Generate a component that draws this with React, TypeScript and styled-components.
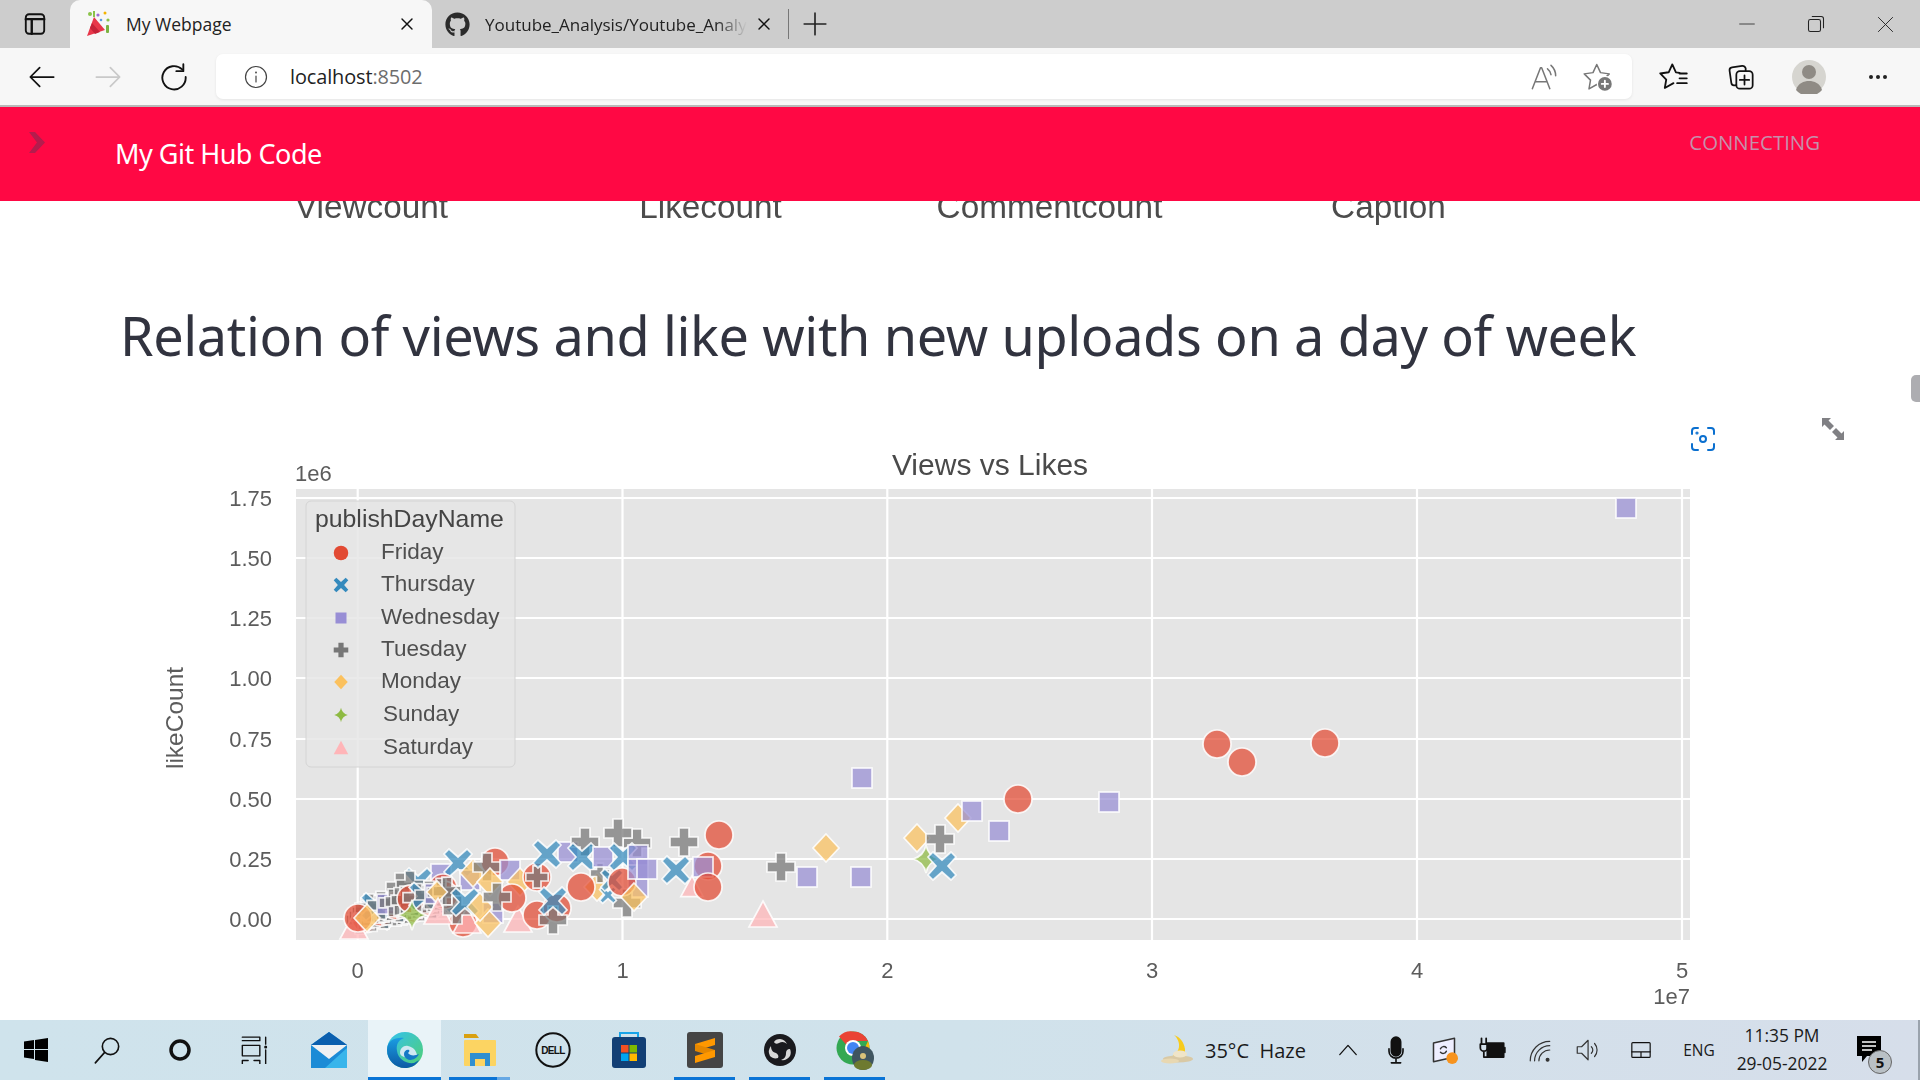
import React from 'react';
import styled, { createGlobalStyle } from 'styled-components';
import { FaGithub } from 'react-icons/fa';

const Global = createGlobalStyle`
  html, body { margin: 0; padding: 0; background: #fff; overflow: hidden; }
  * { box-sizing: border-box; }
`;

const UI = `"Open Sans", "Noto Sans", "Liberation Sans", sans-serif`;

const Screen = styled.div`
  width: 1920px; height: 1080px; display: flex; flex-direction: column; overflow: hidden;
  font-family: ${UI}; background: #fff;
`;

/* ---------- browser chrome ---------- */
const TabStrip = styled.div`
  height: 48px; flex: none; background: #cdcdcd; display: flex; align-items: stretch;
`;
const Slot = styled.div<{ $w: number }>`
  width: ${p => p.$w}px; flex: none;
  display: flex; align-items: center; justify-content: center;
`;
const Tab = styled.div<{ $active?: boolean; $w: number }>`
  width: ${p => p.$w}px; flex: none; display: flex; align-items: center; position: relative;
  padding-left: ${p => (p.$active ? 16 : 13)}px;
  background: ${p => (p.$active ? '#f7f7f7' : 'transparent')};
  border-radius: ${p => (p.$active ? '10px 10px 0 0' : '0')};
`;
const TabTitle = styled.span<{ $w: number; $active?: boolean }>`
  width: ${p => p.$w}px; margin-left: ${p => (p.$active ? 14 : 15)}px; font-size: ${p => (p.$active ? 17.5 : 17)}px; color: #222;
  white-space: nowrap; overflow: hidden; flex: none;
  ${p => (p.$active ? '' : '-webkit-mask-image: linear-gradient(90deg,#000 88%,transparent);')}
`;
const TabClose = styled.div<{ $ml: number }>`
  margin-left: ${p => p.$ml}px; display: flex; flex: none;
`;
const TabDivider = styled.div`
  width: 1px; height: 30px; background: #777; align-self: center; margin-left: 14px; flex: none;
`;
const WindowControls = styled.div`
  margin-left: auto; display: flex; align-items: center; height: 100%;
`;
const Toolbar = styled.div`
  height: 59px; flex: none; background: #f7f7f7; border-bottom: 2px solid #b9b9b9;
  display: flex; align-items: flex-start; padding-left: 9px; padding-top: 6px;
`;
const ToolSlot = styled.div<{ $w: number }>`
  width: ${p => p.$w}px; height: 45px; flex: none; display: flex; align-items: center; justify-content: center;
`;
const AddressBar = styled.div`
  width: 1416px; height: 45px; margin-left: 9px; margin-right: 8px; flex: none; background: #fff; border-radius: 7px;
  box-shadow: 0 1px 3px rgba(0,0,0,.08); display: flex; align-items: center; padding-left: 28px; padding-right: 7px;
`;
const Host = styled.span`
  margin-left: 22px; font-size: 19.9px; color: #222; flex: 1; letter-spacing: -.1px;
`;
const Port = styled.span`color: #6d6d6d;`;

/* ---------- streamlit page ---------- */
const RedHeader = styled.header`
  height: 94px; flex: none; background: #ff0844; position: relative; z-index: 2;
  display: flex; align-items: flex-start; padding-left: 29px;
`;
const Collapse = styled.div`margin-top: 25px; width: 16px; height: 21px; display: flex;`;
const HeaderLink = styled.span`
  margin-left: 70px; margin-top: 26px; color: #fff; font-size: 27px; line-height: 42px;
  font-family: "Noto Sans", sans-serif; letter-spacing: -.5px;
`;
const Status = styled.span`
  margin-left: auto; margin-right: 100px; margin-top: 20px; font-size: 20.4px; line-height: 31px; color: #c690ab;
`;
const Content = styled.main`
  flex: 1; position: relative; overflow: hidden; background: #fff;
`;
const ClippedHeads = styled.div`
  margin-top: -13px; padding-left: 202px; display: grid; grid-template-columns: repeat(4, 339px);
  font-family: "Liberation Sans", Arial, sans-serif; font-size: 33.3px; line-height: 38px; color: #4c4c4c;
  text-align: center; filter: blur(.5px);
`;
const Heading = styled.h2`
  margin: 73px 0 0 120px; font-weight: 400; font-family: "Noto Sans", sans-serif; font-size: 54px; line-height: 72px;
  color: #31333f; white-space: nowrap; letter-spacing: -.37px;
`;
const Figure = styled.div`
  position: relative; margin: 59px 0 0 150px; width: 1550px; height: 580px;
`;
const ChartSvg = styled.svg`
  display: block; width: 1550px; height: 580px; filter: blur(.6px);
`;
const ChartText = styled.text<{ $s: number; $c?: string }>`
  font-family: "Liberation Sans", Arial, sans-serif; font-size: ${p => p.$s}px; fill: ${p => p.$c ?? '#5c5c5c'};
`;
const CameraBtn = styled.div`
  position: absolute; left: 1541px; top: -3px; width: 24px; height: 24px; display: flex;
`;
const ExpandBtn = styled.div`
  position: absolute; left: 1672px; top: -12px; width: 22px; height: 22px; display: flex;
`;
const ScrollThumb = styled.div`
  position: absolute; right: 0; top: 174px; width: 9px; height: 27px; border-radius: 5px 0 0 5px; background: #adadb1;
`;

/* ---------- taskbar ---------- */
const Taskbar = styled.footer`
  height: 60px; flex: none; display: flex; align-items: stretch; position: relative;
  background: linear-gradient(90deg, #cfe3ec 0%, #d0e2eb 50%, #d6deea 100%);
  border-right: 2px solid #9aa3ad;
`;
const TaskSlot = styled.div<{ $w: number; $ml?: number; $on?: boolean; $active?: boolean }>`
  width: ${p => p.$w}px; margin-left: ${p => p.$ml ?? 0}px; flex: none; position: relative;
  display: flex; align-items: center; justify-content: center; padding-bottom: 1px;
  background: ${p => (p.$active ? '#e9f3f8' : 'transparent')};
  ${p => (p.$on ? 'border-bottom: 3px solid #0a74d6; padding-top: 3px;' : '')}
`;
const SplitUnderline = styled.div`
  position: absolute; left: 48px; right: 0; bottom: -3px; height: 3px; background: #66a8e4;
`;
const Weather = styled.span`
  margin-left: 3px; width: 111px; flex: none; align-self: center; font-size: 20px; color: #1a1a1a; white-space: pre;
`;
const Lang = styled.span`font-size: 15.5px; color: #1a1a1a;`;
const Clock = styled.div`
  display: flex; flex-direction: column; align-items: center; gap: 5px; font-size: 17.4px; line-height: 23px; color: #1a1a1a;
`;
const Tray = styled.div`margin-left: auto; display: flex; align-items: stretch; padding-right: 16px;`;
const NotifWrap = styled.div`position: relative; width: 26px; height: 28px;`;
const NotifBadge = styled.span`
  position: absolute; left: 11px; top: 14px; width: 24px; height: 24px; border-radius: 50%; background: #b9c0c5;
  border: 1px solid #666; font-size: 15px; font-weight: 700; color: #111; display: flex; align-items: center; justify-content: center;
`;
const DellWord = styled.text`
  font-family: "Liberation Sans", sans-serif; font-weight: 700; font-size: 10px; letter-spacing: -.6px; fill: #111;
`;

/* ---------- icons ---------- */
const L = ({ s = 24, children, sw = 1.6, c = '#111' }: { s?: number; children: React.ReactNode; sw?: number; c?: string }) => (
  <svg width={s} height={s} viewBox="0 0 24 24" fill="none" stroke={c} strokeWidth={sw} strokeLinecap="round" strokeLinejoin="round">{children}</svg>
);

const Party = () => (
  <svg width="26" height="28" viewBox="0 0 26 28">
    <path d="M1 26 L8 7 L19 20 Z" fill="#e8374a" />
    <path d="M6 13 L14 22 L9 24 L4 18Z" fill="#c62238" />
    <circle cx="4" cy="4" r="2" fill="#8bc34a" /><circle cx="12" cy="5" r="1.6" fill="#9c6bd6" />
    <circle cx="19" cy="3" r="1.5" fill="#f4b400" /><circle cx="22" cy="10" r="1.6" fill="#8bc34a" />
    <rect x="20" y="15" width="3" height="8" rx="1" fill="#7cb342" /><circle cx="15" cy="10" r="1.3" fill="#5c9be0" />
    <rect x="7" y="1" width="2" height="6" fill="#8bc34a" />
  </svg>
);

const C: Record<string, string> = {
  o: '#E24A33', x: '#348ABD', s: '#988ED5', p: '#777777', d: '#FBC15E', e: '#8EBA42', t: '#FFB5B8',
};
type Kind = 'o' | 'x' | 's' | 'p' | 'd' | 'e' | 't';

const Marker = ({ k, x, y, r = 1, a = 0.73, edge = true }: { k: Kind; x: number; y: number; r?: number; a?: number; edge?: boolean }) => {
  const common = {
    fill: C[k], fillOpacity: a, stroke: '#fff', strokeOpacity: edge ? 0.85 : 0, strokeWidth: edge ? 1.7 : 0,
  };
  const t = `translate(${x} ${y}) scale(${r})`;
  switch (k) {
    case 'o': return <circle cx={x} cy={y} r={14 * r} {...common} />;
    case 's': return <rect x={x - 10 * r} y={y - 10 * r} width={20 * r} height={20 * r} {...common} />;
    case 'p': return <path transform={t} d="M-5-14H5V-5H14V5H5V14H-5V5H-14V-5H-5Z" {...common} vectorEffect="non-scaling-stroke" />;
    case 'x': return <path transform={t} d="M-9-14L0-6 9-14 14-9 6 0 14 9 9 14 0 6-9 14-14 9-6 0-14-9Z" {...common} vectorEffect="non-scaling-stroke" />;
    case 'd': return <path transform={t} d="M0-14L13 0 0 14-13 0Z" {...common} vectorEffect="non-scaling-stroke" />;
    case 'e': return <path transform={t} d="M0-14Q2-3 13 0Q2 3 0 14Q-2 3-13 0Q-2-3 0-14Z" {...common} vectorEffect="non-scaling-stroke" />;
    default: return <path transform={t} d="M0-14L14 12H-14Z" {...common} vectorEffect="non-scaling-stroke" />;
  }
};

/* dense run of small uploads near the origin */
const originRun: [Kind, number, number, number?][] = [];
const cycle: Kind[] = ['p', 'o', 'p', 'x', 'p', 's', 'p', 'p'];
for (let i = 0; i < 56; i++) {
  const x = 360 + (i % 14) * 6 + Math.floor(i / 14) * 3;
  const y = 920 - (i % 14) * 1.3 - Math.floor(i / 14) * 4;
  originRun.push([cycle[i % cycle.length], x, y, 1]);
}

const pts: [Kind, number, number, number?][] = [
  ['o', 495, 862], ['s', 441, 874], ['x', 458, 863], ['x', 418, 882], ['p', 400, 887], ['p', 410, 885],
  ['o', 443, 888], ['s', 470, 880], ['d', 473, 873], ['p', 487, 867], ['s', 510, 870], ['d', 520, 882],
  ...originRun,
  ['o', 463, 923], ['t', 467, 921], ['d', 437, 892, .8], ['s', 493, 913], ['d', 488, 923], ['d', 490, 882],
  ['t', 354, 927], ['o', 358, 918], ['d', 367, 918], ['e', 412, 915, 1.1],
  ['t', 438, 912], ['p', 457, 910], ['x', 465, 902], ['d', 480, 907], ['t', 518, 920], ['o', 512, 898], ['p', 497, 897],
  ['o', 537, 915], ['o', 537, 877], ['p', 537, 877, .8], ['o', 557, 908], ['p', 553, 920], ['x', 553, 901],
  ['s', 568, 852], ['p', 585, 842], ['x', 547, 854], ['x', 582, 857], ['d', 597, 887], ['o', 581, 887], ['p', 600, 873, .7], ['s', 603, 857],
  ['p', 637, 843], ['p', 618, 833], ['x', 623, 857], ['s', 638, 855], ['s', 638, 887], ['p', 627, 903], ['x', 608, 895, .6], ['x', 612, 880, .8], ['o', 622, 882],
  ['s', 638, 869], ['s', 647, 869], ['d', 634, 897],
  ['t', 692, 887, .8], ['o', 708, 866], ['x', 676, 870], ['s', 703, 867], ['o', 708, 887], ['p', 684, 842], ['o', 719, 835],
  ['t', 763, 915], ['p', 781, 867], ['s', 807, 877], ['d', 826, 848], ['s', 862, 778], ['s', 861, 877], ['d', 917, 838], ['p', 940, 839],
  ['e', 926, 859], ['x', 942, 866], ['d', 958, 818], ['s', 972, 811], ['s', 999, 831], ['o', 1018, 799], ['s', 1109, 802],
  ['o', 1217, 744], ['o', 1242, 762], ['o', 1325, 743], ['s', 1626, 508],
];

const ys = [
  ['1.75', 498], ['1.50', 558], ['1.25', 618], ['1.00', 678], ['0.75', 739], ['0.50', 799], ['0.25', 859], ['0.00', 919],
] as [string, number][];
const xs = [357.7, 622.5, 887.3, 1152, 1417, 1682];

const legend: [Kind, string, number, number][] = [
  ['o', 'Friday', 552, 381], ['x', 'Thursday', 584, 381], ['s', 'Wednesday', 617, 381], ['p', 'Tuesday', 649, 381],
  ['d', 'Monday', 681, 381], ['e', 'Sunday', 714, 383], ['t', 'Saturday', 747, 383],
];

const Chart = () => (
  <ChartSvg viewBox="150 430 1550 580">
    <rect x="296" y="489" width="1394" height="451" fill="#e5e5e5" />
    {ys.map(([, y]) => <line key={y} x1="296" x2="1690" y1={y} y2={y} stroke="#fff" strokeWidth="2.2" />)}
    {xs.map(x => <line key={x} x1={x} x2={x} y1="489" y2="940" stroke="#fff" strokeWidth="2.2" />)}
    <ChartText $s={30} $c="#4a4a4a" x="990" y="475" textAnchor="middle">Views vs Likes</ChartText>
    <ChartText $s={22} x="295" y="481">1e6</ChartText>
    {ys.map(([t, y]) => <ChartText key={t} $s={22} x="272" y={y + 8} textAnchor="end">{t}</ChartText>)}
    {xs.map((x, i) => <ChartText key={x} $s={22} x={x} y="978" textAnchor="middle">{i}</ChartText>)}
    <ChartText $s={22} x="1690" y="1004" textAnchor="end">1e7</ChartText>
    <ChartText $s={24.5} x="0" y="0" textAnchor="middle" transform="translate(183 718) rotate(-90)">likeCount</ChartText>
    {pts.map(([k, x, y, r], i) => <Marker key={i} k={k} x={x} y={y} r={r ?? 1} />)}
    <rect x="306" y="501" width="209" height="266" rx="5" fill="#e5e5e5" fillOpacity=".82" stroke="#d4d4d4" />
    <ChartText $s={24.8} $c="#444" x="315" y="527">publishDayName</ChartText>
    {legend.map(([k, label, y, x]) => (
      <g key={label}>
        <Marker k={k} x={341} y={y + 1} r={k === 's' ? .55 : .52} a={1} edge={false} />
        <ChartText $s={22.5} $c="#4f4f4f" x={x} y={y + 7}>{label}</ChartText>
      </g>
    ))}
  </ChartSvg>
);

const EdgeLogo = () => (
  <svg width="38" height="38" viewBox="0 0 38 38">
    <defs>
      <linearGradient id="eg1" x1="0" y1="0" x2="1" y2="1"><stop offset="0" stopColor="#35c1f1" /><stop offset="1" stopColor="#50d070" /></linearGradient>
      <linearGradient id="eg2" x1="0" y1="0" x2="0" y2="1"><stop offset="0" stopColor="#1b9de2" /><stop offset="1" stopColor="#0c59a4" /></linearGradient>
    </defs>
    <circle cx="19" cy="19" r="18" fill="url(#eg1)" />
    <path d="M1 19C1 9 10 6 18 7 12 9 10 14 11 20c1 8 9 13 17 12l5-3c-3 6-9 8-14 8C9 37 1 29 1 19Z" fill="url(#eg2)" />
    <path d="M14 22c0-5 4-8 8-7 5 1 8 4 9 9-5 3-10 3-13 2-2-1-4-2-4-4Z" fill="#cfe8f2" />
    <path d="M18 23c0-3 3-5 5-4 1 1 0 2-1 3 2 3 7 3 11 1-3 6-9 7-12 5-2-1-3-3-3-5Z" fill="#1479c6" />
  </svg>
);
const MailIcon = () => (
  <svg width="36" height="36" viewBox="0 0 36 36">
    <path d="M0 13L18 0 36 13V36H0Z" fill="#1b8bd6" />
    <path d="M0 13L18 0 36 13 18 13Z" fill="#0b5fae" />
    <path d="M0 13H36L18 27Z" fill="#eef1f3" />
    <path d="M36 16V36H14Z" fill="#40bff0" opacity=".8" />
  </svg>
);
const FolderIcon = () => (
  <svg width="34" height="36" viewBox="0 0 34 36">
    <path d="M1 2h12l3 4H1Z" fill="#d9a010" />
    <rect x="1" y="8" width="32" height="26" rx="1" fill="#fcd462" />
    <path d="M7 34V21h20v13h-5v-7h-10v7Z" fill="#2f8fd0" />
  </svg>
);
const DellIcon = () => (
  <svg width="36" height="38" viewBox="0 0 36 36">
    <circle cx="18" cy="18" r="16.7" fill="none" stroke="#111" strokeWidth="2" />
    <DellWord x="18" y="22" textAnchor="middle">DELL</DellWord>
  </svg>
);
const StoreIcon = () => (
  <svg width="36" height="38" viewBox="0 0 36 38">
    <path d="M9 6V2h18v4" fill="none" stroke="#18a4e8" strokeWidth="2" />
    <rect x="1" y="6" width="34" height="31" rx="3" fill="#123f75" />
    <rect x="10" y="14" width="7.5" height="7.5" fill="#f25022" /><rect x="18.5" y="14" width="7.5" height="7.5" fill="#7fba00" />
    <rect x="10" y="22.5" width="7.5" height="7.5" fill="#00a4ef" /><rect x="18.5" y="22.5" width="7.5" height="7.5" fill="#ffb900" />
  </svg>
);
const SublimeIcon = () => (
  <svg width="36" height="36" viewBox="0 0 36 36">
    <rect width="36" height="36" rx="3" fill="#454545" />
    <path d="M8 12L28 6V13L8 19Z" fill="#ff9800" />
    <path d="M8 12L28 18V25L8 19Z" fill="#e58700" />
    <path d="M8 24L28 18V25L8 31Z" fill="#ff9800" />
  </svg>
);
const ObsIcon = () => (
  <svg width="32" height="36" viewBox="0 0 32 32">
    <circle cx="16" cy="16" r="16" fill="#1a1a1e" />
    <path d="M16 5a9 9 0 0 1 7 5c-2-2-5-3-8-1-2 1-4 1-5-1 1-2 3-3 6-3Z" fill="#d8d8d8" />
    <path d="M6 22a9 9 0 0 1 1-10c0 3 1 6 5 7 2 1 3 3 2 5-3 1-6 0-8-2Z" fill="#d8d8d8" />
    <path d="M26 22a9 9 0 0 1-9 4c3-1 5-3 5-7 0-2 1-4 4-4 1 2 1 5 0 7Z" fill="#d8d8d8" />
  </svg>
);
const ChromeIcon = () => (
  <svg width="38" height="40" viewBox="0 0 38 40">
    <circle cx="17" cy="18" r="16.5" fill="#34a853" />
    <path d="M17 1.5A16.5 16.5 0 0 1 32 11H17a7 7 0 0 0-6.5 4L3 6.5A16.5 16.5 0 0 1 17 1.5Z" fill="#ea4335" />
    <path d="M32 11a16.5 16.5 0 0 1-12 23l7-12Z" fill="#fbbc05" />
    <circle cx="17" cy="18" r="8" fill="#fff" /><circle cx="17" cy="18" r="6" fill="#4285f4" />
    <ellipse cx="27" cy="28" rx="11" ry="12" fill="#3f5560" />
    <ellipse cx="27" cy="35" rx="9" ry="5" fill="#6e7a30" />
    <ellipse cx="27" cy="26" rx="3" ry="3" fill="#d9c27a" />
  </svg>
);
const MoonIcon = () => (
  <svg width="36" height="36" viewBox="0 0 36 36">
    <path d="M18 3C10 10 11 22 24 26 17 30 6 28 7 17 8 10 12 5 18 3Z" transform="matrix(-1 0 0 1 34 0)" fill="#f7cb1e" />
    <ellipse cx="20" cy="27" rx="15" ry="3.4" fill="#d9c9a5" /><ellipse cx="22" cy="22" rx="7" ry="3.6" fill="#efe4c8" /><ellipse cx="12" cy="29" rx="9" ry="2.5" fill="#e8d8b2" />
  </svg>
);

const STAR = 'M11 2L14 8.500L21 9.500L16 14.500L17.200 21.500L11 18L4.800 21.500L6 14.500L1 9.500L8 8.500Z';

export default function App() {
  return (
    <>
      <Global />
      <Screen>
        <TabStrip>
          <Slot $w={70}>
            <L s={26} sw={1.7}><rect x="3.5" y="3" width="17" height="18" rx="3" /><path d="M3.5 7.5h17M9 7.5V21" strokeWidth="2.2" /></L>
          </Slot>
          <Tab $active $w={362}>
            <Party />
            <TabTitle $active $w={264}>My Webpage</TabTitle>
            <TabClose $ml={7}><L s={20} sw={1.7}><path d="M6 6l12 12M18 6L6 18" /></L></TabClose>
          </Tab>
          <Tab $w={342}>
            <FaGithub size={25} color="#2b2b2b" />
            <TabTitle $w={262}>Youtube_Analysis/Youtube_Analysis</TabTitle>
            <TabClose $ml={7}><L s={20} sw={1.7}><path d="M6 6l12 12M18 6L6 18" /></L></TabClose>
          </Tab>
          <TabDivider />
          <Slot $w={52}><L s={26} sw={1.5} c="#222"><path d="M12 2v20M2 12h20" /></L></Slot>
          <WindowControls>
            <Slot $w={70}><L s={16} sw={1.2} c="#222"><path d="M1 12h22" /></L></Slot>
            <Slot $w={68}><L s={18} sw={1.4} c="#222"><rect x="2" y="6" width="16" height="16" rx="2.5" /><path d="M7 2h12a3 3 0 0 1 3 3v12" /></L></Slot>
            <Slot $w={70}><L s={17} sw={1.3} c="#222"><path d="M2 2l20 20M22 2L2 22" /></L></Slot>
          </WindowControls>
        </TabStrip>
        <Toolbar>
          <ToolSlot $w={66}><L s={28} sw={1.5}><path d="M22 12H3M10 4l-8 8 8 8" /></L></ToolSlot>
          <ToolSlot $w={66}><L s={28} sw={1.5} c="#c9c9c9"><path d="M2 12h19M14 4l8 8-8 8" /></L></ToolSlot>
          <ToolSlot $w={66}><L s={28} sw={1.6}><path d="M19 5.5A10 10 0 1 0 22 12" /><path d="M20 1v6h-6" /></L></ToolSlot>
          <AddressBar>
            <L s={24} sw={1.2} c="#444"><circle cx="12" cy="12" r="10.5" /><path d="M12 11v6" /><circle cx="12" cy="7.5" r=".4" /></L>
            <Host>localhost<Port>:8502</Port></Host>
            <ToolSlot $w={54}><L s={28} sw={1.3} c="#777"><path d="M2 22L9 4h1l7 18M4.5 16h10" /><path d="M15 5a8 8 0 0 1 3 5M18 2a12 12 0 0 1 4 9" /></L></ToolSlot>
            <ToolSlot $w={54}>
              <L s={30} sw={1.2} c="#777"><path d={STAR} /><circle cx="17.500" cy="17.500" r="6.500" fill="#fff" stroke="none" /><circle cx="17.500" cy="17.500" r="5.500" fill="#777" stroke="none" /><path d="M17.500 15v5M15 17.500h5" stroke="#fff" strokeWidth="1.500" /></L>
            </ToolSlot>
          </AddressBar>
          <ToolSlot $w={67}><L s={29} sw={1.5}><path d="M17 9L14 8.500L11 2L8 8.500L1 9.500L6 14.500L4.800 21.500L12 17.500" /><path d="M17 9.500h6M17 13.500h6M15 17.500h8" /></L></ToolSlot>
          <ToolSlot $w={67}><L s={28} sw={1.500}><path d="M8 19l-1.500 .2a2.500 2.500 0 0 1-2.800-2.100L2.200 6.500A2.500 2.500 0 0 1 4.300 3.700L13 2.500a3 3 0 0 1 3 2V7" /><rect x="8" y="7" width="14" height="15" rx="3" /><path d="M15 10.500v8M11 14.500h8" /></L></ToolSlot>
          <ToolSlot $w={69}>
            <svg width="34" height="34" viewBox="0 0 34 34">
              <circle cx="17" cy="17" r="17" fill="#d6d5d0" />
              <circle cx="17" cy="12" r="7" fill="#8f8b85" />
              <path d="M4 30c2-7 8-9 13-9s11 2 13 9a17 17 0 0 1-26 0Z" fill="#8f8b85" />
            </svg>
          </ToolSlot>
          <ToolSlot $w={69}>
            <svg width="20" height="6" viewBox="0 0 20 6"><circle cx="3" cy="3" r="2" fill="#222" /><circle cx="10" cy="3" r="2" fill="#222" /><circle cx="17" cy="3" r="2" fill="#222" /></svg>
          </ToolSlot>
        </Toolbar>
        <RedHeader>
          <Collapse>
            <svg width="16" height="21" viewBox="0 0 16 21"><path d="M0 0h6l10 10.500L6 21H0l8-10.500Z" fill="#b41c4d" /></svg>
          </Collapse>
          <HeaderLink>My Git Hub Code</HeaderLink>
          <Status>CONNECTING</Status>
        </RedHeader>
        <Content>
          <ClippedHeads>
            <span>Viewcount</span><span>Likecount</span><span>Commentcount</span><span>Caption</span>
          </ClippedHeads>
          <Heading>Relation of views and like with new uploads on a day of week</Heading>
          <Figure>
            <Chart />
            <CameraBtn>
              <svg width="24" height="24" viewBox="0 0 24 24" fill="none" stroke="#0a6fcf" strokeWidth="2" strokeLinecap="round">
                <path d="M1 7V4a3 3 0 0 1 3-3h3M17 1h3a3 3 0 0 1 3 3v3M23 17v3a3 3 0 0 1-3 3h-3M7 23H4a3 3 0 0 1-3-3v-3" />
                <circle cx="12" cy="12" r="3" /><circle cx="6" cy="6" r=".6" />
              </svg>
            </CameraBtn>
            <ExpandBtn>
              <svg width="22" height="22" viewBox="0 0 22 22" fill="#808084">
                <path d="M0 0h9L6.500 2.500 12 8l-4 4-5.500-5.500L0 9Z" />
                <path d="M22 22h-9l2.500-2.500L10 14l4-4 5.500 5.500L22 13Z" />
              </svg>
            </ExpandBtn>
          </Figure>
          <ScrollThumb />
        </Content>
        <Taskbar>
          <TaskSlot $w={72}>
            <svg width="24" height="24" viewBox="0 0 24 24" fill="#000"><path d="M0 3.500l10-1.400V11H0ZM11 2l13-2v11H11ZM0 12h10v9L0 19.500ZM11 12h13v12l-13-2Z" /></svg>
          </TaskSlot>
          <TaskSlot $w={70}><L s={28} sw={1.4}><circle cx="15" cy="9" r="7" /><path d="M10 14L2 23" /></L></TaskSlot>
          <TaskSlot $w={76}><svg width="24" height="24" viewBox="0 0 24 24"><circle cx="12" cy="12" r="9" fill="none" stroke="#111" strokeWidth="3.500" /></svg></TaskSlot>
          <TaskSlot $w={71}><L s={28} sw={1.2}><path d="M2 1h15v3M2 4h15M2 8h15v9H2ZM2 21h5M12 21h5M2 24v-3M17 24v-3M22 1v6M22 12v12" /><circle cx="22" cy="9.500" r=".7" /></L></TaskSlot>
          <TaskSlot $w={79}><MailIcon /></TaskSlot>
          <TaskSlot $w={73} $on $active><EdgeLogo /></TaskSlot>
          <TaskSlot $w={61} $ml={8} $on><FolderIcon /><SplitUnderline /></TaskSlot>
          <TaskSlot $w={72} $ml={7}><DellIcon /></TaskSlot>
          <TaskSlot $w={72} $ml={4}><StoreIcon /></TaskSlot>
          <TaskSlot $w={61} $ml={9} $on><SublimeIcon /></TaskSlot>
          <TaskSlot $w={61} $ml={14} $on><ObsIcon /></TaskSlot>
          <TaskSlot $w={61} $ml={14} $on><ChromeIcon /></TaskSlot>
          <Tray>
            <TaskSlot $w={52}><MoonIcon /></TaskSlot>
            <Weather>35°C  Haze</Weather>
            <TaskSlot $w={48} $ml={8}><L s={22} sw={1.4}><path d="M3 17l9-10 9 10" /></L></TaskSlot>
            <TaskSlot $w={47}><L s={28} sw={1.4}><rect x="8" y="1" width="8" height="16" rx="4" fill="#111" /><path d="M6 11v2a6 6 0 0 0 12 0v-2M12 19v4M8 23h8" /></L></TaskSlot>
            <TaskSlot $w={49}>
              <L s={28} sw={1.3} c="#333"><path d="M3 6l18-4v16l-18 4Z" fill="#eef" /><path d="M9 11a3 3 0 0 1 5-1M14 13a3 3 0 0 1-5 1" /><circle cx="19" cy="19" r="5" fill="#f7931e" stroke="none" /></L>
            </TaskSlot>
            <TaskSlot $w={48}>
              <L s={28} sw={1.5}><path d="M3 2v5M7 2v5M2 7h6v3a3 3 0 0 1-6 0ZM5 13v5h3" /><rect x="8" y="6" width="14" height="12" fill="#111" /><path d="M23 10v4" /></L>
            </TaskSlot>
            <TaskSlot $w={48}>
              <L s={26} sw={1.1} c="#333"><path d="M3 22a18 18 0 0 1 18-18M7 22a14 14 0 0 1 14-14M11 22a10 10 0 0 1 10-10" /><circle cx="19" cy="21" r="1.300" fill="#333" /></L>
            </TaskSlot>
            <TaskSlot $w={46}>
              <L s={26} sw={1.1} c="#333"><path d="M3 9v6h4l6 6V3L7 9Z" /><path d="M16 9a4 4 0 0 1 0 6M19 6a9 9 0 0 1 0 12" /></L>
            </TaskSlot>
            <TaskSlot $w={62}><L s={22} sw={1.3}><rect x="2" y="4" width="20" height="16" rx="1" /><path d="M2 14h20M12 14v6" /></L></TaskSlot>
            <TaskSlot $w={54}><Lang>ENG</Lang></TaskSlot>
            <TaskSlot $w={112}><Clock><span>11:35 PM</span><span>29-05-2022</span></Clock></TaskSlot>
            <TaskSlot $w={64}>
              <NotifWrap>
                <svg width="26" height="28" viewBox="0 0 26 28"><path d="M0 0h24v20h-14l-5 6v-6H0Z" fill="#000" /><path d="M5 6h14M5 10h14M5 14h10" stroke="#fff" strokeWidth="1.500" /></svg>
                <NotifBadge>5</NotifBadge>
              </NotifWrap>
            </TaskSlot>
          </Tray>
        </Taskbar>
      </Screen>
    </>
  );
}
